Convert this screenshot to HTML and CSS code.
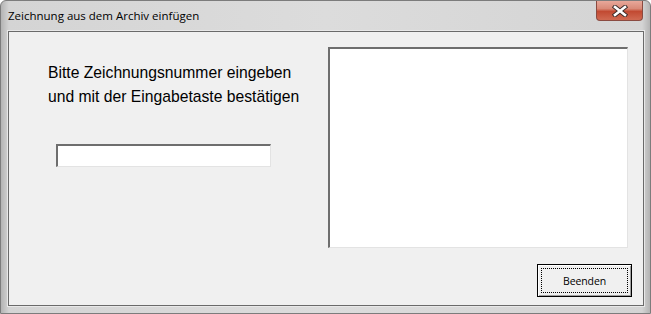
FILE: index.html
```html
<!DOCTYPE html>
<html lang="de">
  <head>
    <meta charset="UTF-8" />
    <title>Zeichnung aus dem Archiv einfügen</title>
    <link rel="stylesheet" href="styles.css">
  </head>
  <body>
    <div class="window">
      <div class="titlebar">
        <span class="title">Zeichnung aus dem Archiv einfügen</span>
        <div class="close">
          <svg width="16" height="12" viewBox="0 0 16 12">
            <path d="M3 2 L13 10 M13 2 L3 10" stroke="#3a2a28" stroke-width="4.4" stroke-linecap="square" fill="none"/>
            <path d="M3 2 L13 10 M13 2 L3 10" stroke="#ffffff" stroke-width="2.6" stroke-linecap="square" fill="none"/>
          </svg>
        </div>
      </div>
      <div class="client">
        <div class="left">
          <p class="prompt">Bitte Zeichnungsnummer eingeben<br>und mit der Eingabetaste bestätigen</p>
          <input class="field" type="text">
        </div>
        <div class="right">
          <div class="preview"></div>
          <button class="btn"><span>Beenden</span></button>
        </div>
      </div>
    </div>
  </body>
</html>
```

FILE: styles.css
```css
body {
  margin: 0;
  padding: 0;
  background-color: #ffffff;
}
.window {
  box-sizing: border-box;
  width: 651px;
  height: 314px;
  display: flex;
  flex-direction: column;
  border: 1px solid #7c7c7c;
  border-radius: 6px 6px 0 0;
  background: linear-gradient(to right, #b4b4b4 0, #d4d4d4 8px, #dcdcdc 50%, #d4d4d4 calc(100% - 8px), #b4b4b4 100%);
}
.titlebar {
  height: 30px;
  display: flex;
  justify-content: space-between;
  align-items: flex-start;
}
.title {
  font-family: "Open Sans", "Noto Sans", sans-serif;
  font-size: 11.5px;
  color: #000;
  padding: 7px 0 0 7px;
}
.close {
  width: 45px;
  height: 19px;
  margin-right: 7px;
  border: 1px solid #8a4a40;
  border-top: none;
  border-radius: 0 0 4px 4px;
  background: linear-gradient(to bottom, #e8a89a 0, #d98a78 40%, #c24a32 55%, #d06a52 100%);
  display: flex;
  justify-content: center;
  align-items: center;
}
.client {
  flex: 1;
  margin: 0 6px 7px 7px;
  border: 1px solid #6a6a6a;
  box-shadow: 0 0 0 1px #e8e8e8;
  background-color: #f0f0f0;
  display: flex;
}
.left {
  width: 280px;
  padding: 29px 0 0 39px;
}
.prompt {
  margin: 0;
  font-family: "Liberation Sans", Arial, sans-serif;
  font-size: 15.7px;
  line-height: 24px;
  color: #000;
}
.field {
  box-sizing: border-box;
  width: 215px;
  height: 23px;
  margin: 35px 0 0 8px;
  padding: 0;
  background: #fff;
  border-style: solid;
  border-width: 2px 1px 1px 2px;
  border-color: #6e6e6e #e3e3e3 #e3e3e3 #6e6e6e;
  outline: none;
}
.right {
  flex: 1;
  display: flex;
  flex-direction: column;
  align-items: flex-start;
  padding-top: 15px;
}
.preview {
  box-sizing: border-box;
  width: 300px;
  height: 201px;
  background: #fff;
  border-style: solid;
  border-width: 2px 1px 1px 2px;
  border-color: #6e6e6e #e3e3e3 #e3e3e3 #6e6e6e;
}
.btn {
  box-sizing: border-box;
  align-self: flex-end;
  width: 95px;
  height: 33px;
  margin: 16px 11px 0 0;
  padding: 3px;
  border: 1px solid #000;
  background: #f0f0f0;
  box-shadow: inset 1px 1px 0 #fff, inset -1px -1px 0 #a0a0a0;
  font-family: "Open Sans", "Noto Sans", sans-serif;
  font-size: 10.5px;
  letter-spacing: -0.1px;
  color: #000;
}
.btn span {
  box-sizing: border-box;
  display: flex;
  justify-content: center;
  align-items: center;
  height: 100%;
  border: 1px dotted #000;
}
```
